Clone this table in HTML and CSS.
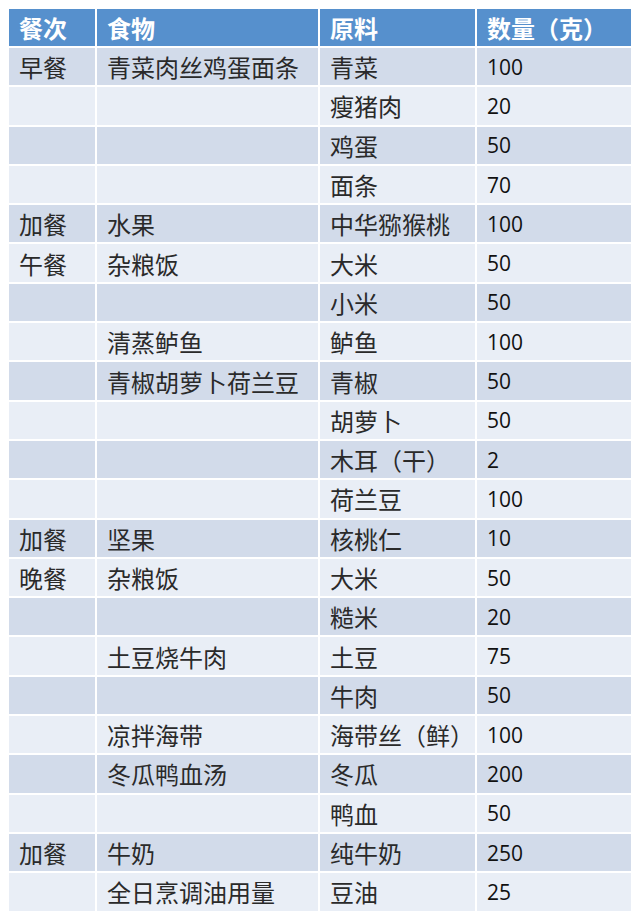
FILE: index.html
```html
<!DOCTYPE html>
<html lang="zh">
<head>
<meta charset="utf-8">
<link rel="stylesheet" href="styles.css">
</head>
<body>
<div class="menu">
  <div class="c h">餐次</div><div class="c h">食物</div><div class="c h">原料</div><div class="c h">数量（克）</div>

  <div class="c d">早餐</div><div class="c d">青菜肉丝鸡蛋面条</div><div class="c d">青菜</div><div class="c d n">100</div>
  <div class="c l"></div><div class="c l"></div><div class="c l">瘦猪肉</div><div class="c l n">20</div>
  <div class="c d"></div><div class="c d"></div><div class="c d">鸡蛋</div><div class="c d n">50</div>
  <div class="c l"></div><div class="c l"></div><div class="c l">面条</div><div class="c l n">70</div>
  <div class="c d">加餐</div><div class="c d">水果</div><div class="c d">中华猕猴桃</div><div class="c d n">100</div>
  <div class="c l">午餐</div><div class="c l">杂粮饭</div><div class="c l">大米</div><div class="c l n">50</div>
  <div class="c d"></div><div class="c d"></div><div class="c d">小米</div><div class="c d n">50</div>
  <div class="c l"></div><div class="c l">清蒸鲈鱼</div><div class="c l">鲈鱼</div><div class="c l n">100</div>
  <div class="c d"></div><div class="c d">青椒胡萝卜荷兰豆</div><div class="c d">青椒</div><div class="c d n">50</div>
  <div class="c l"></div><div class="c l"></div><div class="c l">胡萝卜</div><div class="c l n">50</div>
  <div class="c d"></div><div class="c d"></div><div class="c d">木耳（干）</div><div class="c d n">2</div>
  <div class="c l"></div><div class="c l"></div><div class="c l">荷兰豆</div><div class="c l n">100</div>
  <div class="c d">加餐</div><div class="c d">坚果</div><div class="c d">核桃仁</div><div class="c d n">10</div>
  <div class="c l">晚餐</div><div class="c l">杂粮饭</div><div class="c l">大米</div><div class="c l n">50</div>
  <div class="c d"></div><div class="c d"></div><div class="c d">糙米</div><div class="c d n">20</div>
  <div class="c l"></div><div class="c l">土豆烧牛肉</div><div class="c l">土豆</div><div class="c l n">75</div>
  <div class="c d"></div><div class="c d"></div><div class="c d">牛肉</div><div class="c d n">50</div>
  <div class="c l"></div><div class="c l">凉拌海带</div><div class="c l">海带丝（鲜）</div><div class="c l n">100</div>
  <div class="c d"></div><div class="c d">冬瓜鸭血汤</div><div class="c d">冬瓜</div><div class="c d n">200</div>
  <div class="c l"></div><div class="c l"></div><div class="c l">鸭血</div><div class="c l n">50</div>
  <div class="c d">加餐</div><div class="c d">牛奶</div><div class="c d">纯牛奶</div><div class="c d n">250</div>
  <div class="c l"></div><div class="c l">全日烹调油用量</div><div class="c l">豆油</div><div class="c l n">25</div>
</div>
</body>
</html>
```
FILE: styles.css
```css
html, body {
  margin: 0;
  background: #ffffff;
}
body {
  padding: 9px 0 0 9px;
}
.menu {
  display: grid;
  grid-template-columns: 86px 221px 155px 154px;
  grid-template-rows: 37px repeat(22, 37.3px);
  column-gap: 2px;
  row-gap: 2px;
  width: 622px;
}
.c {
  display: flex;
  align-items: center;
  padding-left: 10px;
  font-family: "Noto Sans CJK SC", sans-serif;
  font-size: 24px;
  color: #2a2a2a;
  white-space: nowrap;
  overflow: hidden;
}
.h {
  background: #5690cd;
  color: #ffffff;
  font-weight: 700;
}
.d {
  background: #d2dbea;
}
.l {
  background: #e9eef6;
}
.n {
  font-family: "Open Sans", sans-serif;
  font-size: 21px;
  color: #111111;
}
```
